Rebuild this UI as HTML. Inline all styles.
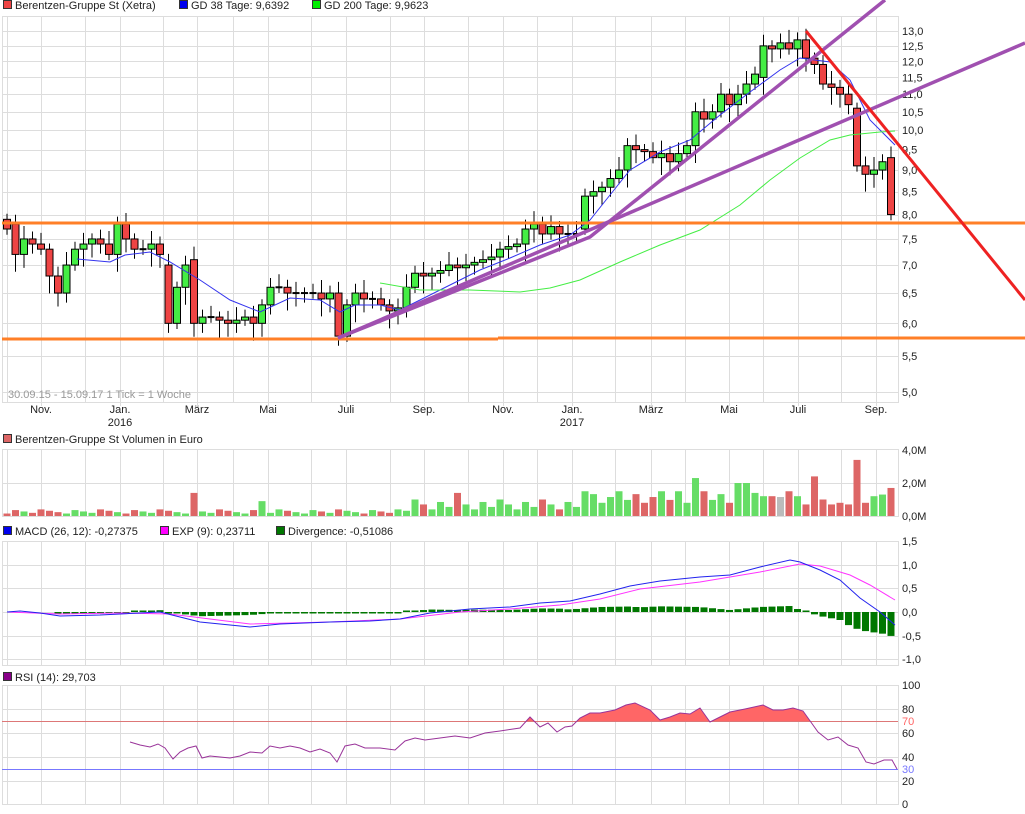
<!DOCTYPE html>
<html><head><meta charset="utf-8"><style>
body{margin:0;background:#fff;width:1025px;height:814px;overflow:hidden;font-family:"Liberation Sans",sans-serif}
svg{display:block}
text{font-family:"Liberation Sans",sans-serif;font-size:11px;fill:#222}
</style></head><body>
<svg id="s" width="1025" height="814" xmlns="http://www.w3.org/2000/svg"></svg>
<script>
var S=document.getElementById('s'),h='';
function L(x1,y1,x2,y2,c,w){h+='<line x1="'+x1+'" y1="'+y1+'" x2="'+x2+'" y2="'+y2+'" stroke="'+c+'" stroke-width="'+(w||1)+'"/>';}
function R(x,y,w,hh,f,st){h+='<rect x="'+x+'" y="'+y+'" width="'+w+'" height="'+hh+'" fill="'+f+'"'+(st?' stroke="'+st+'" stroke-width="1"':'')+'/>';}
function T(x,y,t,a,c){h+='<text x="'+x+'" y="'+y+'"'+(a?' text-anchor="'+a+'"':'')+(c?' style="fill:'+c+'"':'')+'>'+t+'</text>';}
function P(pts,c,w){h+='<polyline fill="none" stroke="'+c+'" stroke-width="'+(w||1)+'" points="'+pts.map(function(p){return p.join(',')}).join(' ')+'"/>';}
var VX=[7,41,85,120,163,197,233,268,311,346,390,424,468,503,537,572,615,651,685,729,763,798,841,876];
function panel(y1,y2,hy){R(2.5,y1+.5,896,y2-y1,'none','#ddd');VX.forEach(function(x){L(x+.5,y1,x+.5,y2,'#ddd')});hy.forEach(function(y){L(2,y+.5,898,y+.5,'#ddd')});}
function py(p){return 1000.6-378*Math.log(p);}
// legends
function leg(x,y,c,t){R(x+.5,y-8.5,8,8,c,'#333');T(x+12,y,t);}
leg(3,9,'#ee4444','Berentzen-Gruppe St (Xetra)');leg(179,9,'#0000ee','GD 38 Tage: 9,6392');leg(312,9,'#00ee00','GD 200 Tage: 9,9623');
// price panel
var pl=[13,12.5,12,11.5,11,10.5,10,9.5,9,8.5,8,7.5,7,6.5,6,5.5,5];
panel(16,402,pl.map(function(p){return Math.round(py(p))}));
pl.forEach(function(p){T(902,py(p)+4,p.toFixed(1).replace('.',','))});
T(8,398,'30.09.15 - 15.09.17   1 Tick = 1 Woche',null,'#999');
var ml=[[41,'Nov.'],[120,'Jan.'],[197,'März'],[268,'Mai'],[346,'Juli'],[424,'Sep.'],[503,'Nov.'],[572,'Jan.'],[651,'März'],[729,'Mai'],[798,'Juli'],[876,'Sep.']];
ml.forEach(function(m){T(m[0],413,m[1],'middle');L(m[0]+.5,402,m[0]+.5,406,'#ddd')});
T(120,426,'2016','middle');T(572,426,'2017','middle');
// candles
var C=[7.7,7.2,7.5,7.4,7.3,6.8,6.5,7.0,7.3,7.4,7.5,7.4,7.2,7.8,7.5,7.3,7.3,7.4,7.2,6.0,6.6,7.0,6.0,6.1,6.1,6.05,6.0,6.05,6.1,6.0,6.3,6.6,6.6,6.5,6.5,6.5,6.5,6.4,6.5,5.8,6.3,6.5,6.4,6.4,6.3,6.2,6.25,6.6,6.85,6.8,6.85,6.9,7.0,6.95,7.0,7.05,7.1,7.15,7.3,7.35,7.4,7.7,7.8,7.6,7.75,7.6,7.6,7.6,8.4,8.5,8.6,8.8,9.0,9.6,9.5,9.45,9.3,9.4,9.2,9.4,9.6,10.5,10.3,10.5,11.0,10.7,11.0,11.3,11.6,12.5,12.4,12.6,12.4,12.7,12.1,11.9,11.3,11.2,11.0,10.7,9.1,8.9,9.0,9.2,8.0];
var O=[7.9],n=C.length,st=(891-7)/(n-1),cx=[];
for(var i=1;i<n;i++)O.push(C[i-1]);
O[1]=7.8;O[19]=7.0;O[22]=7.1;O[68]=7.7;O[81]=9.6;O[100]=10.6;O[104]=9.3;O[89]=11.5;
for(var i=0;i<n;i++){var x=7+i*st;cx.push(x);var o=O[i],c=C[i],hi=Math.max(o,c)*(1+0.015+0.02*((i*7)%5)/4),lo=Math.min(o,c)*(1-0.015-0.03*((i*3)%4)/3);
var yh=py(hi),yl=py(lo),yo=py(o),yc=py(c);L(x,yh,x,yl,'#000');
var t=Math.min(yo,yc),b=Math.max(yo,yc);if(b-t<1.5){L(x-3.5,t,x+3.5,t,'#000',2);}else R(x-3.5,t,7,b-t,c>=o?'#44ee44':'#ee4444','#000');}
P([[77,259],[110,262],[125,255],[150,252],[170,262],[200,280],[230,300],[260,312],[290,298],[320,300],[340,312],[355,305],[380,305],[400,310],[420,300],[450,285],[480,270],[510,258],[540,245],[570,235],[590,220],[610,195],[630,170],[660,152],[690,140],[720,115],[750,92],[780,70],[800,58],[830,62],[850,80],[870,120],[895,145]],'#3333ee');
P([[380,283],[420,290],[470,290],[520,292],[550,288],[580,280],[620,262],[660,245],[700,230],[740,205],[770,180],[800,158],[830,140],[850,135],[880,132],[895,131]],'#44ee44');
L(2,223,1025,223,'#ff7f27',3);L(2,339,498,339,'#ff7f27',3);L(498,338,1025,338,'#ff7f27',3);
L(338,338,1025,43,'#a050b0',3.5);P([[338,338],[590,237],[885,0]],'#a050b0',3.5);
L(806,31,1025,300,'#ee2222',3);
// volume
leg(3,443,'#dd6666','Berentzen-Gruppe St Volumen in Euro');
panel(449,516,[449,483]);T(902,454,'4,0M');T(902,487,'2,0M');T(902,520,'0,0M');
for(var i=0;i<n;i++){var v;if(i<48)v=0.15+0.25*((i*5)%7)/6;else if(i<68)v=0.4+0.6*((i*3)%5)/4;else v=0.8+0.7*((i*7)%5)/4;
if(i==22)v=1.4;if(i==30)v=0.9;if(i==53)v=1.4;if(i==68)v=1.5;if(i==79)v=1.5;if(i==81)v=2.3;if(i==86||i==87)v=2.0;if(i==88)v=1.4;if(i==89||i==90)v=1.2;if(i==92)v=1.5;if(i==93)v=1.2;if(i==94)v=0.7;if(i==95)v=2.4;if(i==96)v=1.0;if(i==97)v=0.7;if(i==98)v=0.8;if(i==99)v=0.7;if(i==100)v=3.4;if(i==101)v=0.8;if(i==102)v=1.2;if(i==103)v=1.3;if(i==104)v=1.7;
var col=C[i]>=O[i]?'#66dd66':'#dd6666';if(i==91)col='#bbbbbb';R(cx[i]-3.5,516-v*16.5,7,v*16.5,col);}
// MACD
leg(3,535,'#0000ee','MACD (26, 12): -0,27375');leg(160,535,'#ff00ff','EXP (9): 0,23711');leg(276,535,'#007700','Divergence: -0,51086');
var my=[541,565,588,612,636,659];panel(541,665,my);['1,5','1,0','0,5','0,0','-0,5','-1,0'].forEach(function(t,k){T(902,my[k]+4,t)});
var MB=[[7,612],[20,611],[40,613],[60,616],[100,615],[160,612],[180,617],[200,622],[250,627],[280,624],[330,622],[370,621],[400,619],[430,613],[470,609],[510,607],[540,603],[570,601],[600,594],[630,586],[660,581],[700,577],[730,575],[760,567],[790,560],[800,562],[820,570],[840,580],[860,598],[880,612],[895,625]];
var MP=[[7,612],[60,614],[120,613],[170,614],[250,624],[330,622],[400,619],[460,612],[510,609],[560,605],[600,599],[640,589],[700,582],[760,572],[800,564],[820,566],[850,575],[870,585],[895,600]];
function ip(a,x){for(var k=0;k<a.length-1;k++)if(x>=a[k][0]&&x<=a[k+1][0])return a[k][1]+(a[k+1][1]-a[k][1])*(x-a[k][0])/(a[k+1][0]-a[k][0]);return a[a.length-1][1];}
for(var i=0;i<n;i++){var d=ip(MB,cx[i])-ip(MP,cx[i]);if(i<6)continue;var hh=Math.max(Math.abs(d),1.5);R(cx[i]-3.5,d<0?612-hh:612,7,hh,'#007700');}
P(MP,'#ff33ff');P(MB,'#2222ee');
// RSI
leg(3,681,'#880088','RSI (14): 29,703');
var ry=[685,709,733,757,781,804];panel(685,804,ry);[100,80,60,40,20,0].forEach(function(t,k){T(902,ry[k]+4,t)});
L(2,721.5,898,721.5,'#dd7777');L(2,769.5,898,769.5,'#7777ff');T(902,725,'70',null,'#ff6666');T(902,773,'30',null,'#7777ff');
var RS=[[130,742],[140,745],[150,747],[158,744],[165,748],[173,759],[180,752],[188,748],[196,746],[202,758],[210,756],[230,758],[240,756],[250,752],[262,753],[270,746],[280,748],[290,746],[300,748],[310,752],[320,749],[330,753],[337,762],[345,746],[355,744],[365,748],[380,748],[395,750],[405,741],[415,738],[425,740],[440,738],[455,736],[470,738],[485,733],[500,731],[520,728],[530,717],[540,727],[548,723],[557,732],[565,727],[572,726],[580,718],[590,713],[600,713],[615,710],[626,705],[635,703],[650,710],[660,720],[670,717],[680,713],[690,714],[700,708],[710,722],[720,717],[730,712],[745,709],[763,705],[773,710],[783,710],[793,708],[803,711],[818,732],[828,740],[838,737],[848,745],[858,748],[866,762],[874,764],[884,760],[892,760],[897,769]];
h+='<clipPath id="c7"><rect x="0" y="0" width="1025" height="721"/></clipPath>';
h+='<polygon clip-path="url(#c7)" fill="#ff6666" points="130,721 '+RS.map(function(p){return p.join(',')}).join(' ')+' 897,721"/>';
P(RS,'#993399');
S.innerHTML=h;
</script>
</body></html>
